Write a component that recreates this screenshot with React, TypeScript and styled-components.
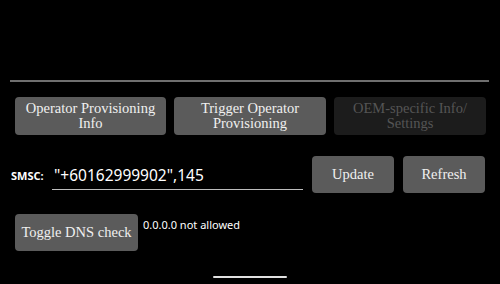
import styled, { createGlobalStyle } from 'styled-components';

const Global = createGlobalStyle`
  html, body {
    margin: 0;
    padding: 0;
    background: #000000;
  }
`;

const Screen = styled.div`
  width: 500px;
  height: 284px;
  background: #000000;
  display: flex;
  flex-direction: column;
  overflow: hidden;
  position: relative;
`;

const Divider = styled.div`
  height: 2px;
  background: #6f6f6f;
  margin: 80px 11px 0 10px;
`;

const ButtonRow = styled.div<{ top: number }>`
  display: flex;
  gap: 8px;
  padding-left: 15px;
  margin-top: ${(p) => p.top}px;
  align-items: center;
`;

const Button = styled.button<{ w: number; h?: number; disabled?: boolean }>`
  width: ${(p) => p.w}px;
  height: ${(p) => p.h ?? 38}px;
  background: ${(p) => (p.disabled ? '#1c1c1c' : '#5b5b5b')};
  color: ${(p) => (p.disabled ? '#555555' : '#f0f0f0')};
  border: none;
  border-radius: 4px;
  font-family: 'Liberation Serif', serif;
  font-size: 14.5px;
  line-height: 15px;
  padding: 0 3px;
  text-align: center;
  white-space: ${(p) => (p.h ? 'nowrap' : 'normal')};
`;

const SmscRow = styled.div`
  display: flex;
  align-items: center;
  margin-top: 21px;
  padding-left: 11px;
`;

const Label = styled.span`
  font-family: 'Noto Sans', sans-serif;
  font-weight: bold;
  font-size: 11px;
  color: #ffffff;
  width: 41px;
  margin-top: 2px;
`;

const Input = styled.div`
  width: 251px;
  height: 29px;
  border-bottom: 1px solid #bdbdbd;
  font-family: 'Noto Sans', sans-serif;
  font-size: 15.5px;
  color: #ffffff;
  padding-left: 2px;
  margin-right: 9px;
  box-sizing: border-box;
  line-height: 28px;
  margin-top: 2px;
`;

const Actions = styled.div`
  display: flex;
  gap: 9px;
`;

const DnsRow = styled.div`
  display: flex;
  align-items: flex-start;
  margin-top: 21px;
  padding-left: 15px;
`;

const Status = styled.span`
  font-family: 'Noto Sans', sans-serif;
  font-size: 11px;
  color: #ffffff;
  margin-left: 5px;
  margin-top: 3px;
`;

const NavHandle = styled.div`
  position: absolute;
  left: 213px;
  top: 276px;
  width: 74px;
  height: 2px;
  border-radius: 1px;
  background: #e0e0e0;
`;

export default function App() {
  return (
    <Screen>
      <Global />
      <Divider />
      <ButtonRow top={15}>
        <Button w={151}>Operator Provisioning Info</Button>
        <Button w={152}>Trigger Operator Provisioning</Button>
        <Button w={152} disabled>
          OEM-specific Info/ Settings
        </Button>
      </ButtonRow>
      <SmscRow>
        <Label>SMSC:</Label>
        <Input>"+60162999902",145</Input>
        <Actions>
          <Button w={82} h={37}>Update</Button>
          <Button w={82} h={37}>Refresh</Button>
        </Actions>
      </SmscRow>
      <DnsRow>
        <Button w={123} h={37}>Toggle DNS check</Button>
        <Status>0.0.0.0 not allowed</Status>
      </DnsRow>
      <NavHandle />
    </Screen>
  );
}
